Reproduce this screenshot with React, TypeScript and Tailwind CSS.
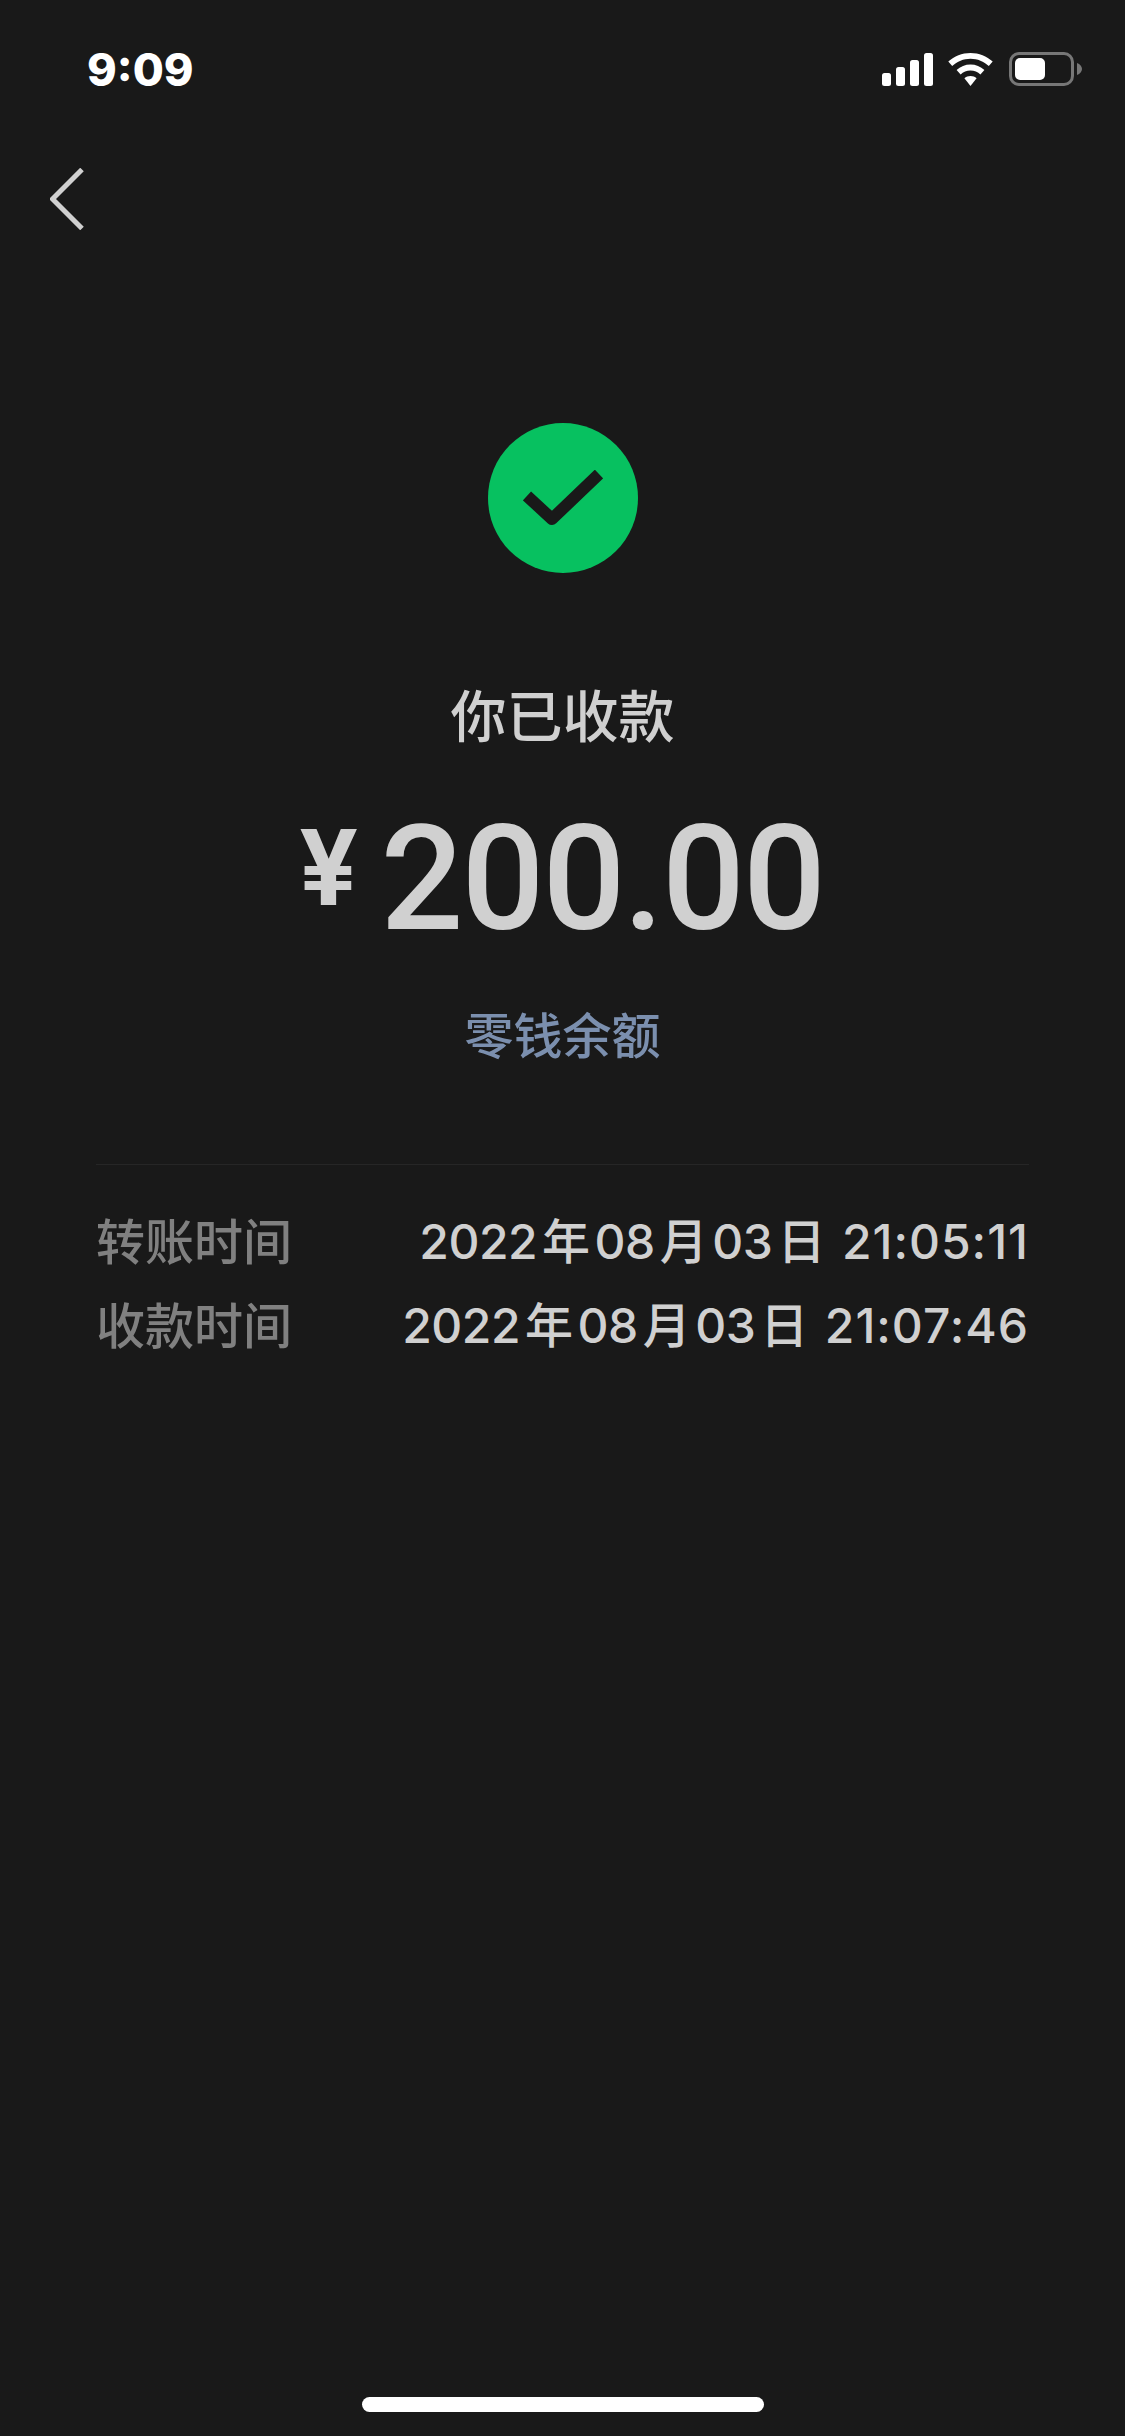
export default function App() {
  const cjk = "font-['Inter','Noto_Sans_CJK_SC',sans-serif]";
  const Han = ({ c }: { c: string }) => <span className="mx-[5px]">{c}</span>;
  const Row = ({ label, y, m, d, t }: { label: string; y: string; m: string; d: string; t: string }) => (
    <div className="flex h-[84px] items-center justify-between">
      <span className="text-[49px] leading-none font-medium text-[#808080]">{label}</span>
      <span className="flex items-center text-[48px] leading-none font-medium text-[#d0d0d0]">
        <span className="tracking-[-0.5px]">{y}<Han c="年" />{m}<Han c="月" />{d}<Han c="日" /></span>
        <span className="ml-[12px] tracking-[1px]">{t}</span>
      </span>
    </div>
  );
  return (
    <div className={`flex h-[2436px] w-[1125px] flex-col overflow-hidden bg-[#191919] ${cjk}`}>
      <div className="flex h-[34px] mt-[52px] items-center justify-between pl-[87px] pr-[43px]">
        <span className="text-[45px] leading-none font-extrabold text-white">9:09</span>
        <div className="flex items-center">
          <svg width="51" height="33" viewBox="0 0 51 33" fill="white">
            <rect x="0" y="20" width="9" height="13" rx="2.5" />
            <rect x="14" y="14" width="9" height="19" rx="2.5" />
            <rect x="28" y="7" width="9" height="26" rx="2.5" />
            <rect x="42" y="0" width="9" height="33" rx="2.5" />
          </svg>
          <svg className="ml-[15px]" width="45" height="33" viewBox="0 0 45 33" fill="white">
            <path d="M22.5 0C14 0 6.3 3.2 0.3 8.6L4.2 13C9.2 8.6 15.5 5.8 22.5 5.8S35.8 8.6 40.8 13L44.7 8.6C38.7 3.2 31 0 22.5 0Z" />
            <path d="M22.5 11.5C17.3 11.5 12.4 13.5 8.6 17L12.6 21.5C15.2 19 18.7 17.5 22.5 17.5S29.8 19 32.4 21.5L36.4 17C32.6 13.5 27.7 11.5 22.5 11.5Z" />
            <path d="M22.5 23C20.2 23 18 23.8 16.4 25.3L22.5 33L28.6 25.3C27 23.8 24.8 23 22.5 23Z" />
          </svg>
          <div className="ml-[16px] flex h-[34px] w-[65px] items-center rounded-[10px] border-[3px] border-[#777777] pl-[3px]">
            <div className="h-[22px] w-[30px] rounded-[5px] bg-white" />
          </div>
          <svg className="ml-[3px]" width="5" height="12" viewBox="0 0 5 12" fill="#777777">
            <path d="M0 0C3 1 5 3.5 5 6S3 11 0 12Z" />
          </svg>
        </div>
      </div>
      <div className="mt-[82px] pl-[50px]">
        <svg className="block" width="34" height="62" viewBox="0 0 34 62" fill="none" stroke="#d0d0d0" strokeWidth="5">
          <path d="M32 1.5L2.5 31L32 60.5" />
        </svg>
      </div>
      <div className="mt-[193px] flex flex-col items-center">
        <div className="flex h-[150px] w-[150px] items-center justify-center rounded-full bg-[#07c160]">
          <svg width="80" height="56" viewBox="0 0 80 56" fill="none" stroke="#191919" strokeWidth="12" strokeLinejoin="round">
            <path d="M4 26L29 49L76 4" />
          </svg>
        </div>
        <div className="mt-[114px] text-[56px] leading-[60px] font-medium text-[#d0d0d0]">你已收款</div>
        <div className="mt-[78px] flex h-[110px] items-start pr-[2px]">
          <span className="mt-[-13px] text-[104px] leading-[110px] font-bold text-[#d0d0d0]">¥</span>
          <span className="ml-[22px] font-['Roboto',sans-serif] text-[146px] leading-[110px] font-medium tracking-[-2px] text-[#d0d0d0]">200.00</span>
        </div>
        <div className="mt-[76px] text-[49px] leading-[52px] font-medium text-[#7b8fae]">零钱余额</div>
      </div>
      <div className="mx-[96px] mt-[101px] border-t border-[#262626]">
        <div className="mt-[35px]">
          <Row label="转账时间" y="2022" m="08" d="03" t="21:05:11" />
          <Row label="收款时间" y="2022" m="08" d="03" t="21:07:46" />
        </div>
      </div>
      <div className="mt-auto mb-[24px] h-[15px] w-[402px] self-center rounded-[8px] bg-white" />
    </div>
  );
}
